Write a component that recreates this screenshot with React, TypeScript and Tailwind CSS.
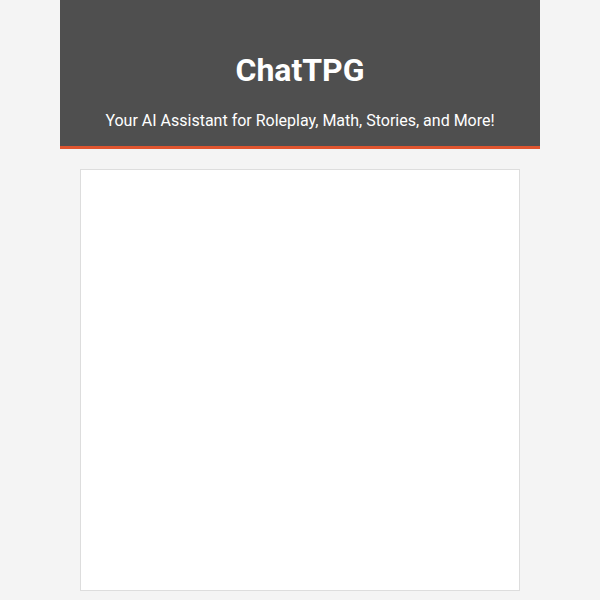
export default function App() {
  return (
    <div className="min-h-[600px] bg-[#f4f4f4] font-['Roboto',sans-serif]">
      <header className="mx-auto w-[480px] border-b-[3px] border-[#e0552f] bg-[#4f4f4f] px-4 pb-[13px] pt-[51px] text-center text-white">
        <h1 className="text-[32px] font-bold leading-[38px]">ChatTPG</h1>
        <p className="mt-[20px] text-base leading-6">
          Your AI Assistant for Roleplay, Math, Stories, and More!
        </p>
      </header>
      <main className="mx-auto mt-[20px] h-[422px] w-[440px] border border-[#dddddd] bg-white" />
    </div>
  );
}
